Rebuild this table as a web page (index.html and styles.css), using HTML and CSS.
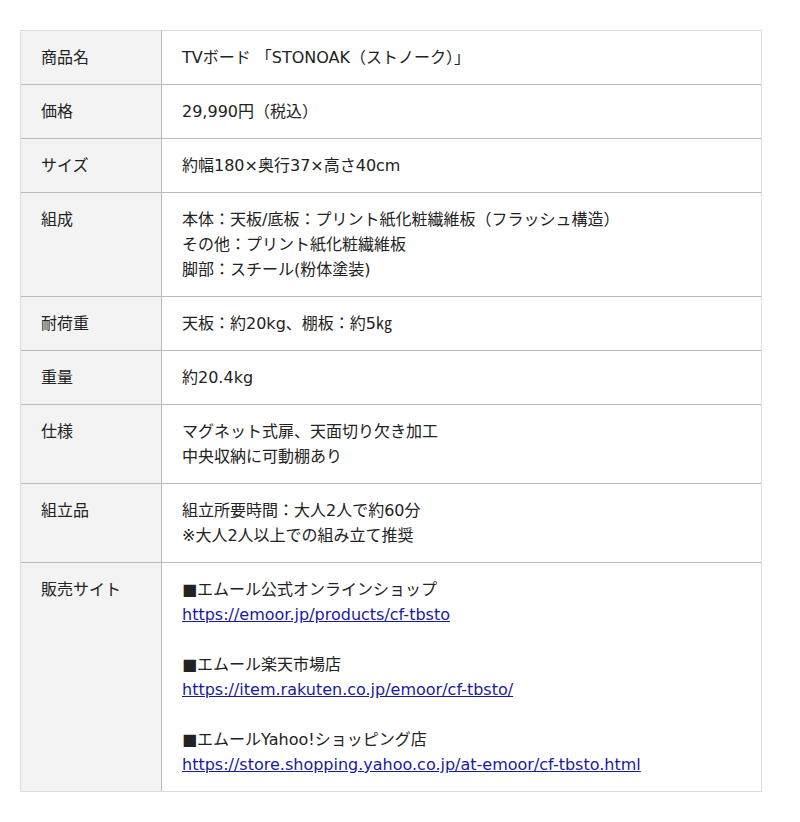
FILE: index.html
```html
<!DOCTYPE html>
<html>
<head>
<meta charset="utf-8">
<title>TVボード STONOAK</title>
<link rel="stylesheet" href="styles.css">
</head>
<body>
<div class="spec">
  <div class="row"><div class="label">商品名</div><div class="value">TVボード 「STONOAK（ストノーク）」</div></div>
  <div class="row"><div class="label">価格</div><div class="value">29,990円（税込）</div></div>
  <div class="row"><div class="label">サイズ</div><div class="value">約幅180×奥行37×高さ40cm</div></div>
  <div class="row"><div class="label">組成</div><div class="value">本体：天板/底板：プリント紙化粧繊維板（フラッシュ構造）<br>その他：プリント紙化粧繊維板<br>脚部：スチール(粉体塗装)</div></div>
  <div class="row"><div class="label">耐荷重</div><div class="value">天板：約20kg、棚板：約5㎏</div></div>
  <div class="row"><div class="label">重量</div><div class="value">約20.4kg</div></div>
  <div class="row"><div class="label">仕様</div><div class="value">マグネット式扉、天面切り欠き加工<br>中央収納に可動棚あり</div></div>
  <div class="row"><div class="label">組立品</div><div class="value">組立所要時間：大人2人で約60分<br>※大人2人以上での組み立て推奨</div></div>
  <div class="row"><div class="label">販売サイト</div><div class="value">■エムール公式オンラインショップ<br><a href="#">https://emoor.jp/products/cf-tbsto</a><br><br>■エムール楽天市場店<br><a href="#">https://item.rakuten.co.jp/emoor/cf-tbsto/</a><br><br>■エムールYahoo!ショッピング店<br><a href="#">https://store.shopping.yahoo.co.jp/at-emoor/cf-tbsto.html</a></div></div>
</div>
</body>
</html>
```
FILE: styles.css
```css
html, body {
  margin: 0;
  padding: 0;
  background: #ffffff;
}
body {
  font-family: "DejaVu Sans", "Noto Sans CJK JP", sans-serif;
  font-size: 16px;
  line-height: 25px;
  color: #222222;
}
.spec {
  width: 740px;
  margin: 30px 0 0 20px;
  border: 1px solid #dddddd;
}
.row {
  display: flex;
  border-top: 1px solid #bbbbbb;
}
.row:first-child {
  border-top: none;
}
.label {
  width: 100px;
  flex: none;
  padding: 14px 20px;
  background: #f3f3f3;
  border-right: 1px solid #bbbbbb;
}
.value {
  flex: 1;
  padding: 14px 20px;
}
.value a {
  color: #1a1a9e;
  text-decoration: underline;
}
```
